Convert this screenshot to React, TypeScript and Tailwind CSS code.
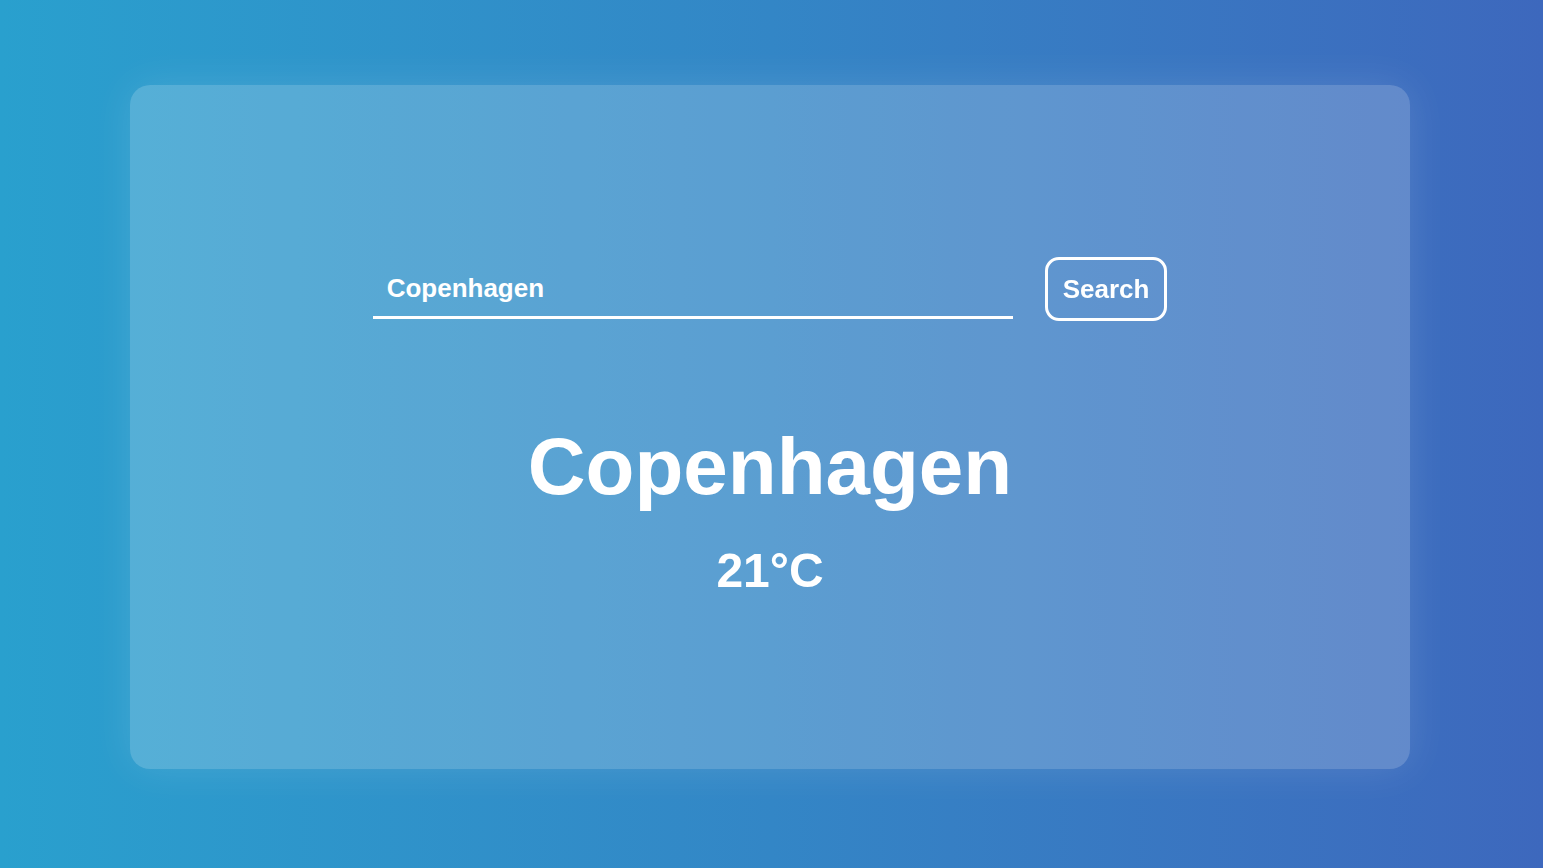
import { useState } from "react";

export default function App() {
  const [city, setCity] = useState("Copenhagen");

  return (
    <div
      className="min-h-screen w-full bg-gradient-to-r from-[#29a0ce] via-[#3386c6] to-[#3d68bd] flex items-start justify-center pt-[85px]"
      style={{ fontFamily: '"Liberation Sans", Arial, sans-serif' }}
    >
      {/* Glass card */}
      <div className="w-[1280px] h-[684px] ml-[-3px] rounded-[20px] bg-white/20 shadow-[0_0_40px_rgba(255,255,255,0.12)] flex flex-col items-center pt-[172px]">
        <div className="flex items-start gap-8">
          <input
            autoFocus
            value={city}
            onChange={(e) => setCity(e.target.value)}
            className="w-[640px] h-[62px] pt-1 px-[14px] bg-transparent border-b-[3px] border-white text-white text-[26px] font-bold outline-none caret-white"
          />
          <button className="h-[64px] px-[15px] border-[3px] border-white rounded-[14px] text-white text-[26px] font-bold">
            Search
          </button>
        </div>

        <h1 className="mt-[106px] text-white text-[80px] font-bold leading-none">
          Copenhagen
        </h1>
        <p className="mt-[40px] text-white text-[48px] font-bold leading-none">21°C</p>
      </div>
    </div>
  );
}
